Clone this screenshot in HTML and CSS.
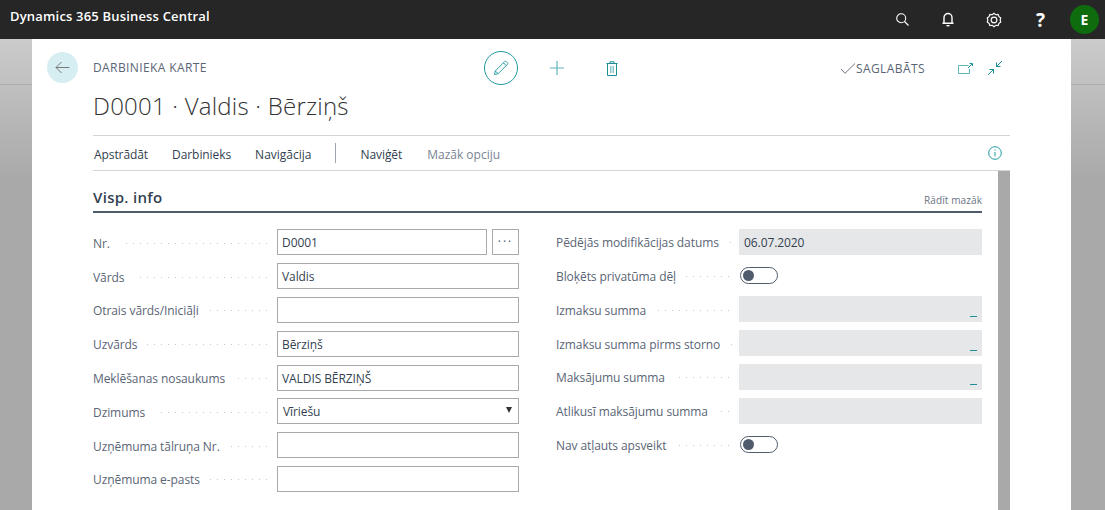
FILE: index.html
```html
<!DOCTYPE html>
<html>
    <head>
        <title>Dynamics 365 Business Central</title>
        <meta charset="utf-8"/>
        <link rel="stylesheet" href="styles.css">
    </head>
    <body class="body">
        <header class="topbar">
            <div class="brand">Dynamics 365 Business Central</div>
            <div class="topicons">
                <svg class="topicon search" width="13" height="13" viewBox="0 0 13 13" fill="none" stroke="#fff" stroke-width="1.100"><circle cx="5.200" cy="5.200" r="4.500"/><path d="M8.500 8.500L12.500 12.500"/></svg>
                <svg class="topicon bell" width="12" height="15" viewBox="0 0 12 15" fill="none" stroke="#fff" stroke-width="1.400"><path d="M2 11V5.500a4 4 0 0 1 8 0V11M.5 11.300h11"/><path d="M4.500 13.700h3"/></svg>
                <svg class="topicon gear" width="16" height="16" viewBox="0 0 18 18" fill="none" stroke="#fff" stroke-width="1.300"><path d="M9 1.500l2 1.600 2.600-.3 1 2.400 2 1.600-.7 2.200.7 2.200-2 1.600-1 2.400-2.600-.3-2 1.600-2-1.600-2.600.3-1-2.400-2-1.600.7-2.200L1.400 6.800l2-1.600 1-2.400 2.600.3z"/><circle cx="9" cy="9" r="3.200"/></svg>
                <span class="help">?</span>
                <span class="avatar">E</span>
            </div>
        </header>
        <div class="backdrop">
            <main class="card">
                <div class="inner">
                    <button class="back">
                        <svg width="15" height="13" viewBox="0 0 15 13" fill="none" stroke="#7a7a7a" stroke-width="1"><path d="M14.500 6.500H1M6.500 1L1 6.500 6.500 12"/></svg>
                    </button>
                    <div class="page">
                        <div class="headrow">
                            <div class="caption">DARBINIEKA KARTE</div>
                            <div class="actions">
                                <span class="editbtn">
                                    <svg width="16" height="16" viewBox="0 0 16 16" fill="none" stroke="#2f9ea3" stroke-width="1"><path d="M1.500 14.500l.8-3.600L11.600 1.600a1.200 1.200 0 0 1 1.700 0l1.100 1.100a1.200 1.200 0 0 1 0 1.700L5.100 13.700z"/><path d="M2.300 10.900l2.800 2.800M10.400 2.800l2.800 2.800"/></svg>
                                </span>
                                <svg class="addicon" width="14" height="14" viewBox="0 0 14 14" fill="none" stroke="#5fb5ba" stroke-width="1.200"><path d="M7 0v14M0 7h14"/></svg>
                                <svg width="12" height="15" viewBox="0 0 12 15" fill="none" stroke="#1f8f96" stroke-width="1"><path d="M.5 2.500h11M1.500 2.500v12h9v-12M4 2.500V.8h4v1.700"/><path d="M4.500 5v7M6 5v7M7.500 5v7" stroke="#8cc8cb"/></svg>
                            </div>
                            <div class="status">
                                <svg width="16" height="11" viewBox="0 0 16 11" fill="none" stroke="#6b7280" stroke-width="1"><path d="M1 6l4 4.300L15 .5"/></svg>
                                <span>SAGLABĀTS</span>
                            </div>
                            <div class="winicons">
                                <svg width="15" height="11" viewBox="0 0 15 11" fill="none" stroke="#5db4b9" stroke-width="1"><path d="M10.500 2.500H.5v8h11V6"/><path d="M10 5l4-4M11.500.5H14.500V3" stroke="#1f8f96"/></svg>
                                <svg width="16" height="16" viewBox="0 0 16 16" fill="none" stroke="#1f8f96" stroke-width="1"><path d="M15 1L9.500 6.500M9.500 2.500v4h4M1 15l5.500-5.500M2.500 9.500h4v4"/></svg>
                            </div>
                        </div>
                        <h1 class="title">D0001 · Valdis · Bērziņš</h1>
                        <nav class="menu">
                            <a>Apstrādāt</a>
                            <a>Darbinieks</a>
                            <a class="wide">Navigācija</a>
                            <i class="menusep"></i>
                            <a>Naviģēt</a>
                            <a class="wide less">Mazāk opciju</a>
                            <svg class="info" width="14" height="14" viewBox="0 0 14 14" fill="none" stroke="#1f9aa0" stroke-width="1"><circle cx="7" cy="7" r="6.300"/><path d="M7 6v4.500M7 3.500v1.200"/></svg>
                        </nav>
                        <div class="scrollarea">
                            <section class="content">
                                <div class="sechead">
                                    <h2>Visp. info</h2>
                                    <a>Rādīt mazāk</a>
                                </div>
                                <div class="columns">
                                    <div class="col">
                                        <div class="field"><label>Nr.</label><div class="box withbtn">D0001</div><span class="dots3">···</span></div>
                                        <div class="field"><label>Vārds</label><div class="box">Valdis</div></div>
                                        <div class="field"><label>Otrais vārds/Iniciāļi</label><div class="box"></div></div>
                                        <div class="field"><label>Uzvārds</label><div class="box">Bērziņš</div></div>
                                        <div class="field"><label>Meklēšanas nosaukums</label><div class="box">VALDIS BĒRZIŅŠ</div></div>
                                        <div class="field"><label>Dzimums</label><div class="box select">Vīriešu<b class="caret"></b></div></div>
                                        <div class="field"><label>Uzņēmuma tālruņa Nr.</label><div class="box"></div></div>
                                        <div class="field"><label>Uzņēmuma e-pasts</label><div class="box"></div></div>
                                    </div>
                                    <div class="col">
                                        <div class="field"><label>Pēdējās modifikācijas datums</label><div class="box ro">06.07.2020</div></div>
                                        <div class="field"><label>Bloķēts privatūma dēļ</label><span class="toggle"></span></div>
                                        <div class="field"><label>Izmaksu summa</label><div class="box ro"><u class="dash"></u></div></div>
                                        <div class="field"><label>Izmaksu summa pirms storno</label><div class="box ro"><u class="dash"></u></div></div>
                                        <div class="field"><label>Maksājumu summa</label><div class="box ro"><u class="dash"></u></div></div>
                                        <div class="field"><label>Atlikusī maksājumu summa</label><div class="box ro"></div></div>
                                        <div class="field"><label>Nav atļauts apsveikt</label><span class="toggle"></span></div>
                                    </div>
                                </div>
                            </section>
                            <div class="scrollbar"></div>
                        </div>
                    </div>
                </div>
            </main>
        </div>
    </body>
</html>
```

FILE: styles.css
```css
html,.body{
    margin:0px;
    height:100%;
    overflow:hidden;
}
.body{
    font-family:"Open Sans","Liberation Sans",sans-serif;
    font-size:12px;
    letter-spacing:-0.08px;
    color:#5a6575;
}
.topbar{
    height:39px;
    background-color:#262626;
    display:flex;
    align-items:center;
    justify-content:space-between;
    padding:0 6px 0 10px;
}
.brand{
    color:#fff;
    font-weight:600;
    font-size:13px;
    letter-spacing:0.18px;
    margin-top:-8px;
}
.topicons{
    display:flex;
    align-items:center;
}
.topicon{
    display:block;
}
.search{
    margin-right:33px;
}
.bell{
    margin-right:32px;
}
.gear{
    margin-right:34px;
}
.help{
    width:8px;
    text-align:center;
    color:#fff;
    font-weight:700;
    font-size:19px;
    margin-right:26px;
}
.avatar{
    width:29px;
    height:29px;
    border-radius:50%;
    background-color:#0e6b0e;
    color:#fff;
    font-weight:700;
    font-size:14px;
    display:flex;
    align-items:center;
    justify-content:center;
}
.backdrop{
    height:471px;
    background:linear-gradient(#adadad,#adadad) 0 45px/100% 1px no-repeat,
               linear-gradient(#cbcbcb,#a9a9a9 140px);
    padding:0 34px 0 32px;
}
.card{
    background-color:#fff;
    height:100%;
}
.inner{
    display:flex;
    padding:13px 0 0 15px;
}
.back{
    width:31px;
    height:31px;
    border:0;
    padding:0;
    border-radius:50%;
    background-color:#d6eef1;
    display:flex;
    align-items:center;
    justify-content:center;
    flex:none;
}
.page{
    margin-left:15px;
    width:917px;
}
.headrow{
    display:flex;
    align-items:center;
    height:32px;
}
.caption{
    width:391px;
    letter-spacing:0.4px;
    font-size:12px;
    margin-top:-1px;
}
.actions{
    display:flex;
    align-items:center;
    width:356px;
}
.editbtn{
    width:32px;
    height:32px;
    border:1px solid #1f9aa0;
    border-radius:50%;
    display:flex;
    align-items:center;
    justify-content:center;
    margin-right:32px;
}
.addicon{
    margin-right:42px;
}
.status{
    display:flex;
    align-items:center;
    width:118px;
    letter-spacing:0.4px;
}
.winicons{
    display:flex;
    align-items:center;
    gap:14px;
}
.title{
    font-size:24px;
    font-weight:300;
    letter-spacing:0.22px;
    color:#333;
    margin:2px 0 0 0;
    line-height:40px;
}
.menu{
    margin-top:9px;
    border-top:1px solid #d5d5d9;
    border-bottom:1px solid #d5d5d9;
    height:34px;
    display:flex;
    align-items:center;
    gap:24px;
    padding-left:1px;
    color:#333f50;
}
.menu a{
    font-size:12px;
    padding-top:2px;
}
.menu .wide{
    letter-spacing:0;
}
.menusep{
    width:1px;
    height:20px;
    background-color:#a0a6ae;
}
.menu .less{
    color:#7a8494;
    margin-left:1px;
}
.info{
    margin-left:auto;
    margin-right:8px;
}
.scrollarea{
    display:flex;
}
.content{
    width:889px;
}
.scrollbar{
    width:12px;
    height:340px;
    margin-left:16px;
    background-color:#a9a9a9;
}
.sechead{
    height:42px;
    border-bottom:2px solid #505c6d;
    display:flex;
    align-items:flex-end;
    justify-content:space-between;
    box-sizing:border-box;
    padding-bottom:4px;
}
.sechead h2{
    font-size:15px;
    font-weight:600;
    letter-spacing:0.3px;
    color:#333f50;
    margin:0;
}
.sechead a{
    font-size:10px;
    letter-spacing:0.1px;
    color:#6b7280;
}
.columns{
    display:flex;
    justify-content:space-between;
    padding-top:15.8px;
}
.col{
    width:426px;
}
.col:first-child{
    padding-top:0.6px;
}
.col:last-child{
    width:427px;
}
.col:last-child label{
    padding-left:1px;
    width:183px;
}
.field{
    display:flex;
    align-items:center;
    height:26px;
    margin-bottom:7.8px;
}
.field label{
    width:184px;
    flex:none;
    display:flex;
    overflow:hidden;
    white-space:nowrap;
    align-items:center;
    gap:10px;
    padding-top:2px;
}
.field label::after{
    content:"";
    flex:1;
    min-width:2px;
    margin-right:10px;
    height:1px;
    background:repeating-linear-gradient(270deg,#c4c8ce 0 1px,transparent 1px 7px);
}
.box{
    flex:1;
    height:26px;
    box-sizing:border-box;
    border:1px solid #a9a9a9;
    padding:0 4px;
    line-height:26px;
    color:#333f50;
    position:relative;
}
.select{
    padding-left:5px;
}
.withbtn{
    flex:none;
    width:210px;
}
.dots3{
    width:27px;
    height:26px;
    box-sizing:border-box;
    border:1px solid #a9a9a9;
    margin-left:5px;
    text-align:center;
    line-height:24px;
    color:#505c6d;
    letter-spacing:2px;
}
.caret{
    position:absolute;
    right:6px;
    top:8px;
    border-left:3px solid transparent;
    border-right:3px solid transparent;
    border-top:6px solid #333;
}
.ro{
    border:0;
    background-color:#e6e7e9;
    line-height:28px;
    padding-left:5px;
}
.dash{
    position:absolute;
    right:5px;
    bottom:5px;
    width:7px;
    height:1px;
    background-color:#1f8f96;
}
.toggle{
    width:38px;
    height:17px;
    box-sizing:border-box;
    border:1px solid #505c6d;
    border-radius:9px;
    position:relative;
    margin-left:1px;
}
.toggle::before{
    content:"";
    position:absolute;
    left:2px;
    top:2px;
    width:11px;
    height:11px;
    border-radius:50%;
    background-color:#505c6d;
}
```
